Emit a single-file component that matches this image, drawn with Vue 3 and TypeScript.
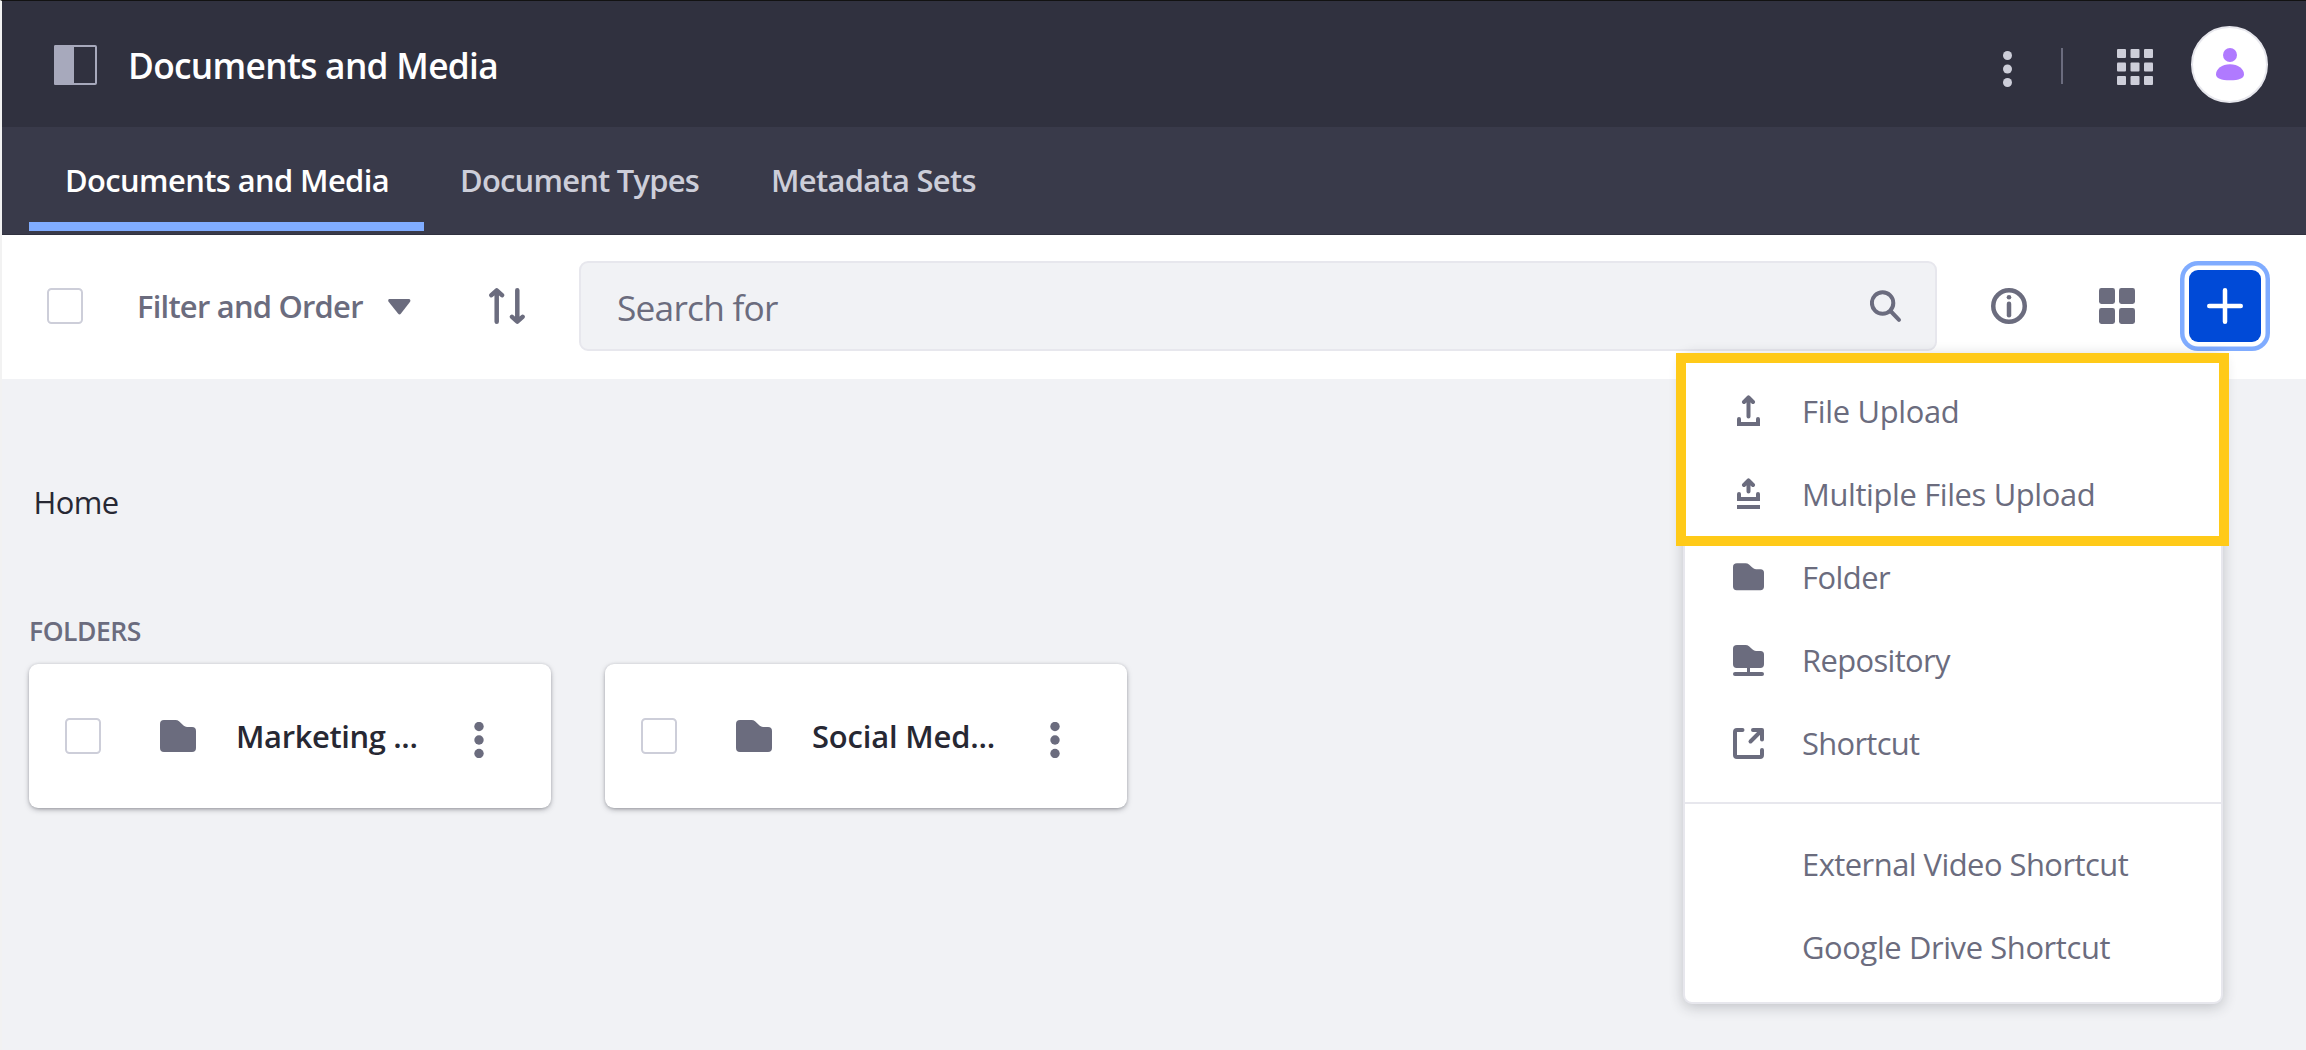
<script setup lang="ts">
interface Label { text: string; tracking: number }
interface MenuItem extends Label { icon?: string }

const tabs: (Label & { active?: boolean })[] = [
  { text: 'Documents and Media', tracking: -0.6, active: true },
  { text: 'Document Types', tracking: -0.76 },
  { text: 'Metadata Sets', tracking: -0.69 },
]

const primaryItems: MenuItem[] = [
  { text: 'File Upload', tracking: -0.3, icon: 'upload' },
  { text: 'Multiple Files Upload', tracking: -0.36, icon: 'upload-multiple' },
  { text: 'Folder', tracking: -0.5, icon: 'folder' },
  { text: 'Repository', tracking: -0.62, icon: 'repository' },
  { text: 'Shortcut', tracking: -0.69, icon: 'shortcut' },
]

const secondaryItems: MenuItem[] = [
  { text: 'External Video Shortcut', tracking: -0.52 },
  { text: 'Google Drive Shortcut', tracking: -0.38 },
]

const folders: Label[] = [
  { text: 'Marketing ...', tracking: -0.36 },
  { text: 'Social Med...', tracking: -0.16 },
]

const cells = [0, 13.5, 27]
</script>

<template>
  <div class="page">
    <header class="control-bar">
      <svg class="panel-icon" width="43" height="40" viewBox="0 0 43 40">
        <rect x="1" y="1" width="41" height="38" rx="1" fill="none" stroke="#a7a9bc" stroke-width="2" />
        <rect width="20" height="40" rx="1.5" fill="#a7a9bc" />
      </svg>
      <h1>Documents and Media</h1>
      <div class="control-actions">
        <svg class="header-dots" width="9" height="36" viewBox="0 0 9 36" fill="#cdced9">
          <circle v-for="y in cells" :key="y" cx="4.5" :cy="y + 4.5" r="4.5" />
        </svg>
        <span class="separator"></span>
        <svg class="apps" width="36" height="36" viewBox="0 0 36 36" fill="#cdced9">
          <template v-for="y in cells" :key="y">
            <rect v-for="x in cells" :key="x" :x="x" :y="y" width="9" height="9" rx="1" />
          </template>
        </svg>
        <span class="avatar">
          <svg width="28" height="33" viewBox="0 0 28 33" fill="#b07aff">
            <circle cx="14" cy="7" r="7" />
            <path d="M14 16.2C6 16.2 0 21 0 26.2 0 30.2 5 32.3 14 32.3S28 30.2 28 26.2C28 21 22 16.2 14 16.2Z" />
          </svg>
        </span>
      </div>
    </header>

    <nav class="tabs">
      <a v-for="tab in tabs" :key="tab.text" class="tab" :class="{ active: tab.active }">
        <span :style="{ letterSpacing: tab.tracking + 'px' }">{{ tab.text }}</span>
      </a>
    </nav>

    <div class="toolbar">
      <span class="checkbox"></span>
      <span class="filter">Filter and Order</span>
      <svg class="caret" width="23" height="16" viewBox="0 0 23 16">
        <path d="M1.2 0H21.3Q23 .8 22.1 2.8L13 14.6Q11.5 16.4 10 14.6L.6 2.8Q-.4 .8 1.2 0Z" fill="#6b6c7e" />
      </svg>
      <svg class="sort" width="36" height="36" viewBox="0 0 36 36" fill="none" stroke="#6b6c7e" stroke-width="4.5" stroke-linecap="round" stroke-linejoin="round">
        <path d="M7.7 33.7V3M2.4 7.2L7.7 2.4 13 7.2M28.3 2.3V33M23 28.8L28.3 33.6 33.6 28.8" />
      </svg>
      <div class="search">
        <span>Search for</span>
        <svg width="32" height="33" viewBox="0 0 32 33" fill="none" stroke="#6b6c7e" stroke-width="4">
          <circle cx="12.6" cy="13" r="10.7" />
          <path d="M20.5 21L29 29.8" stroke-linecap="round" />
        </svg>
      </div>
      <svg class="info" width="36" height="36" viewBox="0 0 36 36">
        <circle cx="18" cy="18" r="15.75" fill="none" stroke="#6b6c7e" stroke-width="4.5" />
        <circle cx="18" cy="9.2" r="2.3" fill="#6b6c7e" />
        <rect x="15.75" y="13.4" width="4.5" height="16" rx="2.25" fill="#6b6c7e" />
      </svg>
      <svg class="view" width="36" height="36" viewBox="0 0 36 36" fill="#6b6c7e">
        <rect width="16" height="16" rx="2.4" />
        <rect x="20" width="16" height="16" rx="2.4" />
        <rect y="20" width="16" height="16" rx="2.4" />
        <rect x="20" y="20" width="16" height="16" rx="2.4" />
      </svg>
      <button class="add" type="button">
        <svg width="36" height="36" viewBox="0 0 36 36" stroke="#fff" stroke-width="4.5" stroke-linecap="round">
          <path d="M18 2.25V33.75M2.25 18H33.75" />
        </svg>
      </button>
    </div>

    <main class="content">
      <div class="breadcrumb">Home</div>
      <h2>FOLDERS</h2>
      <div class="cards">
        <article v-for="folder in folders" :key="folder.text" class="card">
          <span class="checkbox"></span>
          <svg class="card-folder" width="36" height="32" viewBox="0 0 36 32">
            <path d="M4 0H15.5Q17.5 0 19 1.2L23.5 5.5Q25 6.9 27 6.9H32Q36 6.9 36 10.9V28Q36 32 32 32H4Q0 32 0 28V4Q0 0 4 0Z" fill="#6b6c7e" />
          </svg>
          <span class="card-title" :style="{ letterSpacing: folder.tracking + 'px' }">{{ folder.text }}</span>
          <svg class="card-dots" width="10" height="36" viewBox="0 0 10 36" fill="#6b6c7e">
            <circle v-for="y in cells" :key="y" cx="5" :cy="y + 4.5" r="4.7" />
          </svg>
        </article>
      </div>
    </main>

    <div class="menu">
      <div v-for="item in primaryItems" :key="item.text" class="menu-item">
        <svg width="31" height="31" viewBox="0 0 31 31" fill="none" stroke="#6b6c7e" stroke-width="4" stroke-linecap="round" stroke-linejoin="round">
          <template v-if="item.icon === 'upload'">
            <path d="M15.5 21.5V3M11 7L15.5 2.4 20 7" />
            <path d="M6 24V29H25V24" stroke-linejoin="miter" />
            <path d="M4 27H27V31H4Z" fill="#6b6c7e" stroke="none" />
          </template>
          <template v-else-if="item.icon === 'upload-multiple'">
            <path d="M15.5 13.5V3M11 7L15.5 2.4 20 7" />
            <path d="M6 16V21H25V16" stroke-linejoin="miter" />
            <path d="M4 27H27V31H4Z" fill="#6b6c7e" stroke="none" />
          </template>
          <path v-else-if="item.icon === 'folder'" d="M4 2.3H12.5Q14.5 2.3 16 3.6L19.3 6.6Q21 8.3 23 8.3H27.5Q31 8.3 31 11.8V25.6Q31 29.3 27.3 29.3H3.7Q0 29.3 0 25.6V6Q0 2.3 4 2.3Z" fill="#6b6c7e" stroke="none" />
          <g v-else-if="item.icon === 'repository'" fill="#6b6c7e" stroke="none">
            <path d="M4 0H12.5Q14.5 0 16 1.3L19.3 4.3Q21 6 23 6H27.5Q31 6 31 9.5V19.3Q31 23 27.3 23H3.7Q0 23 0 19.3V3.7Q0 0 4 0Z" />
            <path d="M14 22H17V28H14Z" />
            <rect y="27" width="31" height="4" rx="2" />
          </g>
          <path v-else d="M9.5 2H4Q2 2 2 4V27Q2 29 4 29H27Q29 29 29 27V22M20 2H29V11.5M28 3L17.5 13.5" />
        </svg>
        <span :style="{ letterSpacing: item.tracking + 'px' }">{{ item.text }}</span>
      </div>
      <div class="divider"></div>
      <div v-for="item in secondaryItems" :key="item.text" class="menu-item plain">
        <span :style="{ letterSpacing: item.tracking + 'px' }">{{ item.text }}</span>
      </div>
    </div>
    <div class="highlight"></div>
  </div>
</template>

<style>
body {
  background: #f1f2f5;
}
</style>

<style scoped>
.page {
  position: relative;
  box-sizing: border-box;
  width: 2306px;
  height: 1050px;
  overflow: hidden;
  border-top: 1px solid #121212;
  border-left: 2px solid #f2f2f2;
  background: #f1f2f5;
  color: #272833;
  font-family: "Open Sans", "Noto Sans", sans-serif;
  font-size: 30.9px;
  white-space: nowrap;
}

.page * {
  box-sizing: border-box;
}

svg {
  display: block;
  flex: none;
}

.control-bar {
  display: flex;
  align-items: center;
  height: 126px;
  padding: 2px 38px 0 52px;
  background: #30313f;
}

h1 {
  margin: 0 0 0 31px;
  color: #fff;
  font-size: 35.3px;
  font-weight: 600;
  letter-spacing: -0.7px;
}

.control-actions {
  display: flex;
  align-items: center;
  margin-left: auto;
}

.header-dots {
  margin-top: 8px;
}

.separator {
  width: 2px;
  height: 36px;
  margin: 2px 54px 0 48.5px;
  background: #6b6c7e;
}

.apps {
  margin-top: 4px;
}

.avatar {
  display: flex;
  align-items: center;
  justify-content: center;
  width: 77px;
  height: 77px;
  margin: -2px 0 0 38.5px;
  border: 2.25px solid #e7e7ed;
  border-radius: 50%;
  background: #fff;
}

.tabs {
  display: flex;
  height: 108px;
  padding-left: 27px;
  border-bottom: 1px solid #30313f;
  background: #393a4a;
}

.tab {
  display: flex;
  align-items: center;
  height: 104px;
  padding: 11px 36px 0;
  border-bottom: 9px solid transparent;
  color: #cdced9;
  font-weight: 600;
}

.tab.active {
  width: 395px;
  border-color: #80acff;
  color: #fff;
}

.toolbar {
  display: flex;
  align-items: center;
  height: 144px;
  padding: 0 45px 2px;
  background: #fff;
}

.checkbox {
  flex: none;
  width: 36px;
  height: 36px;
  border: 2.25px solid #cdced9;
  border-radius: 4.5px;
  background: #fff;
}

.filter {
  width: 226px;
  margin-left: 54px;
  color: #6b6c7e;
  font-weight: 600;
  letter-spacing: -0.76px;
}

.caret {
  flex: none;
  margin: 2px 0 0 25px;
}

.sort {
  margin-left: 78px;
}

.search {
  display: flex;
  align-items: center;
  justify-content: space-between;
  flex: none;
  width: 1358px;
  height: 90px;
  margin-left: 54px;
  padding: 2px 33px 0 36px;
  border: 2.25px solid #e7e7ed;
  border-radius: 9px;
  background: #f1f2f5;
  color: #6b6c7e;
  font-size: 35.3px;
  letter-spacing: -0.78px;
}

.search svg {
  margin-top: -2px;
}

.info {
  margin-left: 54px;
}

.view {
  margin-left: 72px;
}

.add {
  display: flex;
  align-items: center;
  justify-content: center;
  flex: none;
  width: 72px;
  height: 72px;
  margin-left: 54px;
  padding: 0;
  border: 0;
  border-radius: 9px;
  background: #004ad7;
  box-shadow: 0 0 0 4.5px #fff, 0 0 0 9px #80acff;
}

.content {
  padding: 101px 27px 0;
}

.breadcrumb {
  height: 44px;
  margin-left: 4.5px;
  line-height: 44px;
  letter-spacing: -0.6px;
}

h2 {
  height: 36px;
  margin: 89px 0 0;
  color: #6b6c7e;
  font-size: 26.5px;
  font-weight: 600;
  line-height: 36px;
  letter-spacing: -0.45px;
}

.cards {
  display: flex;
  gap: 54px;
  margin-top: 15px;
}

.card {
  display: flex;
  align-items: center;
  width: 522px;
  height: 144px;
  padding: 0 36px;
  border-radius: 9px;
  background: #fff;
  box-shadow: 0 2.25px 6.75px -2.25px rgba(39, 40, 51, 0.65), 0 0 3px rgba(39, 40, 51, 0.12);
}

.card-folder {
  margin-left: 59px;
}

.card-title {
  width: 201px;
  margin-left: 40px;
  font-weight: 600;
}

.card-dots {
  margin-top: 8px;
  margin-left: 37px;
}

.menu {
  position: absolute;
  top: 352px;
  left: 1681px;
  width: 540px;
  height: 651px;
  padding-top: 14px;
  border: 2px solid #e7e7ed;
  border-radius: 9px;
  background: #fff;
  box-shadow: 0 3px 14px rgba(39, 40, 51, 0.24);
}

.menu-item {
  display: flex;
  align-items: center;
  height: 83.2px;
  padding-left: 48px;
  color: #6b6c7e;
}

.menu-item svg + span {
  margin-left: 38px;
}

.menu-item.plain {
  padding-left: 117px;
}

.divider {
  height: 2px;
  margin: 17px 0 18px;
  background: #e7e7ed;
}

.highlight {
  position: absolute;
  top: 352px;
  left: 1674px;
  width: 553px;
  height: 193px;
  border: 10px solid #ffca18;
}
</style>
